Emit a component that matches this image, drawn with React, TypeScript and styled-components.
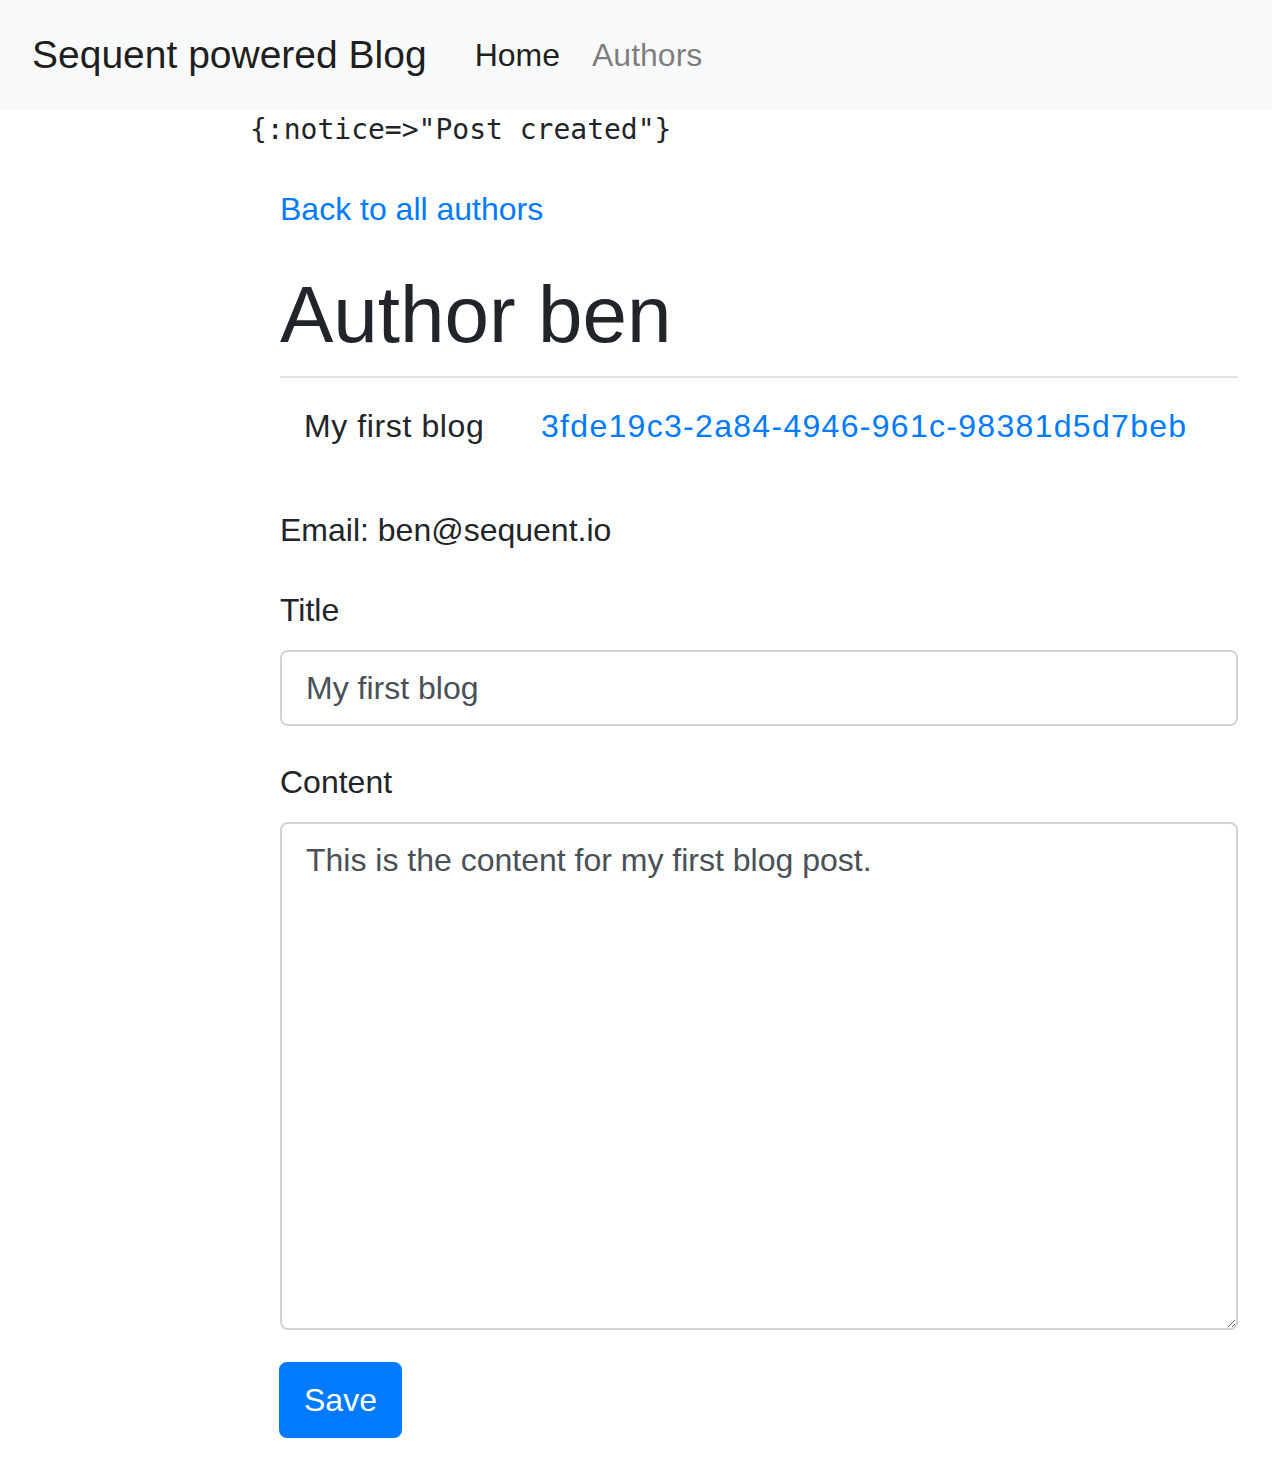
import React from "react";
import styled, { createGlobalStyle } from "styled-components";

const GlobalStyle = createGlobalStyle`
  html, body { margin: 0; padding: 0; background: #fff; }
  body {
    font-family: "Liberation Sans", Arial, Helvetica, sans-serif;
    font-size: 32px;
    line-height: 1.5;
    color: #212529;
  }
  * { box-sizing: border-box; }
`;

const Navbar = styled.nav`
  display: flex;
  align-items: center;
  height: 110px;
  padding: 0 32px;
  background: #f8f9fa;
`;

const Brand = styled.a`
  font-size: 39px;
  line-height: 60px;
  padding: 10px 0;
  margin-right: 32px;
  color: rgba(0, 0, 0, 0.9);
  text-decoration: none;
  white-space: nowrap;
`;

const NavList = styled.div`
  display: flex;
  align-items: center;
`;

const NavLink = styled.a<{ $active?: boolean }>`
  padding: 16px 16px;
  font-size: 32px;
  line-height: 48px;
  color: ${(p) => (p.$active ? "rgba(0,0,0,0.9)" : "rgba(0,0,0,0.5)")};
  text-decoration: none;
`;

const Main = styled.main`
  padding: 0 34px 40px 250px;
`;

const Notice = styled.pre`
  margin: 0 0 35px 0;
  font-family: "DejaVu Sans Mono", "Liberation Mono", monospace;
  font-size: 28px;
  line-height: 40px;
  color: #212529;
`;

const Container = styled.div`
  padding-left: 30px;
`;

const BackPara = styled.p`
  margin: 0 0 34px 0;
`;

const Link = styled.a<{ $spacing?: number }>`
  color: #007bff;
  text-decoration: none;
  letter-spacing: ${(p) => p.$spacing ?? 0}px;
`;

const Heading = styled.h1`
  margin: 0 0 13px 0;
  font-size: 80px;
  line-height: 96px;
  font-weight: 500;
  color: #212529;
`;

const Table = styled.table`
  width: 100%;
  border-collapse: collapse;
  margin-bottom: 32px;
`;

const Cell = styled.td<{ $spacing?: number }>`
  padding: 24px;
  border-top: 2px solid #dee2e6;
  vertical-align: top;
  white-space: nowrap;
  letter-spacing: ${(p) => p.$spacing ?? 0}px;
`;

const Para = styled.p`
  margin: 0 0 32px 0;
`;

const FormGroup = styled.div`
  margin-bottom: 32px;
`;

const Label = styled.label`
  display: block;
  margin-bottom: 16px;
`;

const Input = styled.input`
  display: block;
  width: 100%;
  height: 76px;
  padding: 12px 24px;
  font-family: inherit;
  font-size: 32px;
  line-height: 48px;
  color: #495057;
  background: #fff;
  border: 2px solid #ced4da;
  border-radius: 8px;
  outline: none;
`;

const TextArea = styled.textarea`
  display: block;
  width: 100%;
  height: 508px;
  padding: 12px 24px;
  font-family: inherit;
  font-size: 32px;
  line-height: 48px;
  color: #495057;
  background: #fff;
  border: 2px solid #ced4da;
  border-radius: 8px;
  outline: none;
  resize: vertical;
`;

const Button = styled.button`
  display: inline-block;
  margin-left: -1px;
  padding: 12px 23px;
  font-family: inherit;
  font-size: 32px;
  line-height: 48px;
  color: #fff;
  background: #007bff;
  border: 2px solid #007bff;
  border-radius: 8px;
  cursor: pointer;
`;

export default function App() {
  return (
    <>
      <GlobalStyle />
      <Navbar>
        <Brand href="#">Sequent powered Blog</Brand>
        <NavList>
          <NavLink href="#" $active>
            Home
          </NavLink>
          <NavLink href="#">Authors</NavLink>
        </NavList>
      </Navbar>
      <Main>
        <Notice>{'{:notice=>"Post created"}'}</Notice>
        <Container>
          <BackPara>
            <Link href="#">Back to all authors</Link>
          </BackPara>
          <Heading>Author ben</Heading>
          <Table>
            <tbody>
              <tr>
                <Cell $spacing={0.6}>My first blog</Cell>
                <Cell>
                  <Link href="#" $spacing={1.3}>
                    3fde19c3-2a84-4946-961c-98381d5d7beb
                  </Link>
                </Cell>
              </tr>
            </tbody>
          </Table>
          <Para>Email: ben@sequent.io</Para>
          <form onSubmit={(e) => e.preventDefault()}>
            <FormGroup>
              <Label htmlFor="title">Title</Label>
              <Input id="title" type="text" defaultValue="My first blog" />
            </FormGroup>
            <FormGroup>
              <Label htmlFor="content">Content</Label>
              <TextArea
                id="content"
                rows={10}
                defaultValue="This is the content for my first blog post."
              />
            </FormGroup>
            <Button type="submit">Save</Button>
          </form>
        </Container>
      </Main>
    </>
  );
}
